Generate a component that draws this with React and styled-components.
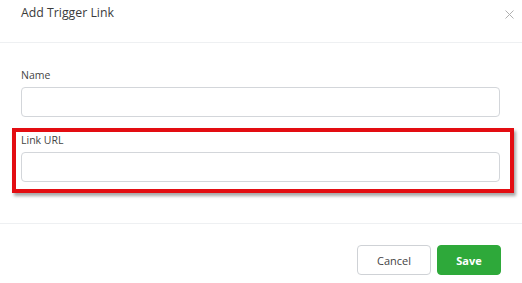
import React from "react";
import styled, { createGlobalStyle } from "styled-components";

const Global = createGlobalStyle`
  * { box-sizing: border-box; }
  html, body { margin: 0; padding: 0; background: #fff; }
  body { font-family: "Open Sans", "Noto Sans", Arial, sans-serif; }
`;

const Modal = styled.div`
  width: 522px;
  height: 283px;
  background: #fff;
  display: flex;
  flex-direction: column;
`;

const Header = styled.div`
  height: 43px;
  border-bottom: 1px solid #eef0f2;
  display: flex;
  justify-content: space-between;
  align-items: flex-start;
  padding: 5px 8px 0 21px;
`;

const Title = styled.h5`
  margin: 0;
  font-size: 12.3px;
  line-height: 16px;
  font-weight: 400;
  color: #3b3b3b;
`;

const Close = styled.button`
  border: 0;
  background: none;
  padding: 0;
  margin-top: 5px;
  width: 9px;
  height: 9px;
  display: flex;
  cursor: pointer;
`;

const Body = styled.div`
  padding: 25px 22px 30px 21px;
  display: flex;
  flex-direction: column;
`;

const Field = styled.div`
  display: flex;
  flex-direction: column;
`;

const Highlight = styled.div`
  margin: 11px -14px 0 -9px;
  padding: 1px 10px 7px 5px;
  border: 4px solid #e30d12;
  box-shadow: 2px 3px 3px rgba(0, 0, 0, 0.35);
`;

const Label = styled.label`
  font-size: 10.5px;
  line-height: 15px;
  color: #454545;
  margin-bottom: 4px;
`;

const Input = styled.input`
  height: 30px;
  width: 100%;
  border: 1px solid #d3d6da;
  border-radius: 4px;
  background: #fff;
  padding: 0 8px;
  font: inherit;
  outline: none;
`;

const Footer = styled.div`
  border-top: 1px solid #eef0f2;
  padding: 21px 21px 0 0;
  display: flex;
  justify-content: flex-end;
  gap: 6px;
`;

const Button = styled.button`
  height: 30px;
  width: ${(p) => p.$w}px;
  border-radius: 4px;
  font-family: "Open Sans", "Noto Sans", Arial, sans-serif;
  font-size: 11px;
  font-weight: ${(p) => (p.$primary ? 700 : 400)};
  color: ${(p) => (p.$primary ? "#fff" : "#444")};
  background: ${(p) => (p.$primary ? "#2ea93a" : "#fff")};
  border: 1px solid ${(p) => (p.$primary ? "#2ea93a" : "#cfd2d6")};
  cursor: pointer;
`;

export default function App() {
  return (
    <>
      <Global />
      <Modal>
        <Header>
          <Title>Add Trigger Link</Title>
          <Close aria-label="Close">
            <svg width="9" height="9" viewBox="0 0 9 9">
              <path d="M0.5 0.5L8.5 8.5M8.5 0.5L0.5 8.5" stroke="#b0b0b0" strokeWidth="1" fill="none" />
            </svg>
          </Close>
        </Header>
        <Body>
          <Field>
            <Label>Name</Label>
            <Input />
          </Field>
          <Highlight>
            <Field>
              <Label>Link URL</Label>
              <Input />
            </Field>
          </Highlight>
        </Body>
        <Footer>
          <Button $w={74}>Cancel</Button>
          <Button $w={64} $primary>Save</Button>
        </Footer>
      </Modal>
    </>
  );
}
